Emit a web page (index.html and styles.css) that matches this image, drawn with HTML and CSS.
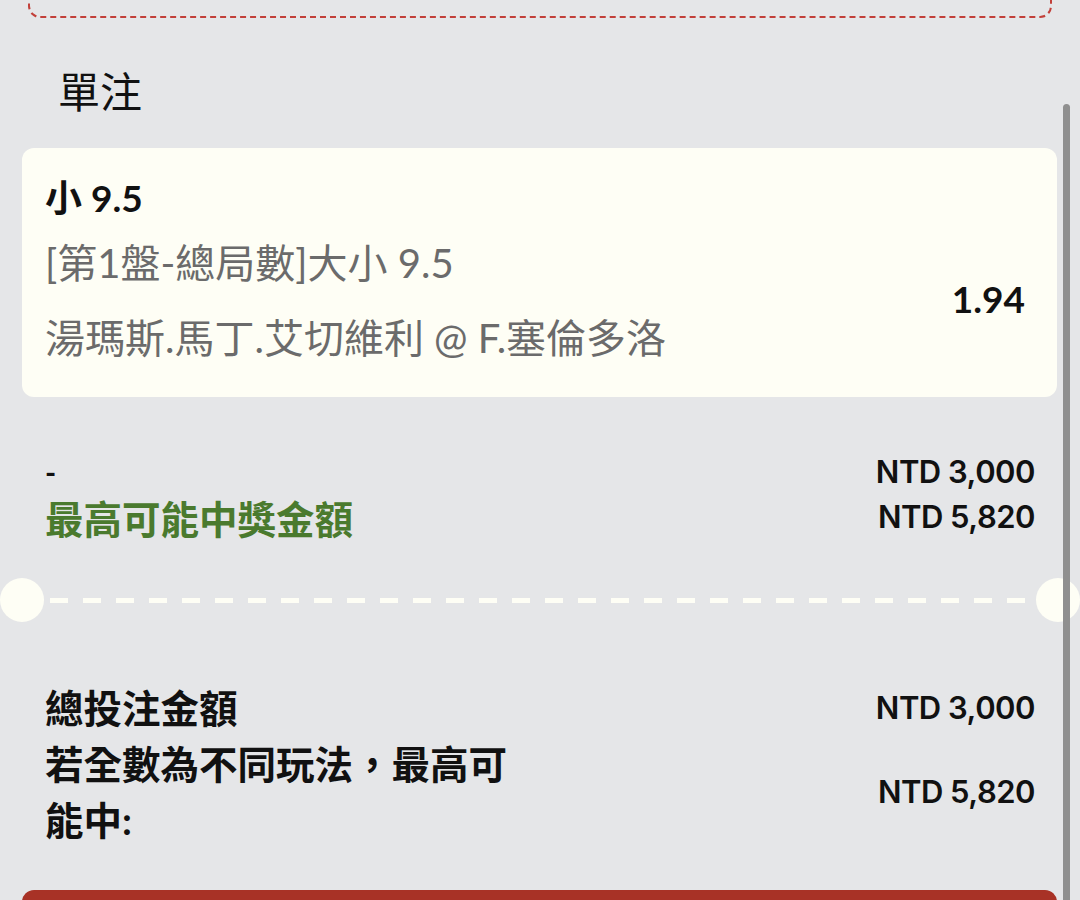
FILE: index.html
```html
<!DOCTYPE html>
<html lang="zh-Hant">
<head>
    <meta charset="UTF-8">
    <meta name="viewport" content="width=device-width, initial-scale=1.0">
    <title>單注</title>
    <link rel="stylesheet" href="styles.css">
</head>
<body>
    <div class="promo"></div>

    <h2 class="section-title">單注</h2>

    <div class="bet-card">
        <div class="bet-info">
            <div class="pick">小 9.5</div>
            <div class="market">[第1盤-總局數]大小 9.5</div>
            <div class="event">湯瑪斯.馬丁.艾切維利 @ F.塞倫多洛</div>
        </div>
        <div class="odds">1.94</div>
    </div>

    <div class="stake">
        <div class="row">
            <span class="stake-input">-</span>
            <span class="amount">NTD 3,000</span>
        </div>
        <div class="row">
            <span class="win-label">最高可能中獎金額</span>
            <span class="amount">NTD 5,820</span>
        </div>
    </div>

    <div class="divider">
        <span class="notch"></span>
        <span class="dashes"></span>
        <span class="notch"></span>
    </div>

    <div class="summary">
        <div class="row">
            <span class="label">總投注金額</span>
            <span class="amount">NTD 3,000</span>
        </div>
        <div class="row">
            <span class="label wrap">若全數為不同玩法，最高可能中:</span>
            <span class="amount">NTD 5,820</span>
        </div>
    </div>

    <button class="place-bet" type="button"></button>

    <div class="scrollbar"></div>
</body>
</html>
```

FILE: styles.css
```css
body {
    margin: 0;
    height: 900px;
    overflow: hidden;
    background-color: #e5e6e8;
    font-family: Lato, "Noto Sans CJK TC", sans-serif;
    color: #111;
}
.promo {
    height: 60px;
    margin: -46px 28px 0;
    border: 2px dashed #c2403a;
    border-radius: 12px;
}
.section-title {
    margin: 0;
    padding: 46px 58px 0;
    font-size: 42px;
    font-weight: 400;
    line-height: 56px;
}
.bet-card {
    display: flex;
    justify-content: space-between;
    margin: 28px 23px 0 22px;
    padding: 30px 32px 39px 23px;
    background: #fefef5;
    border-radius: 12px;
}
.pick {
    font-size: 37px;
    font-weight: bold;
    line-height: 40px;
}
.market, .event {
    color: #6b6b6b;
    font-size: 40px;
    line-height: 40px;
    margin-top: 25px;
}
.event {
    margin-top: 35px;
}
.odds {
    align-self: center;
    padding-top: 61px;
    font-size: 37px;
    font-weight: bold;
}
.row {
    display: flex;
    justify-content: space-between;
    align-items: center;
}
.stake {
    padding: 52px 45px 0 45px;
}
.stake .row {
    height: 45px;
}
.stake-input {
    font-size: 30px;
    font-weight: bold;
}
.win-label {
    color: #4a7a2e;
    font-size: 38.5px;
    font-weight: bold;
}
.amount {
    font-family: Inter, "Noto Sans", sans-serif;
    font-size: 31px;
    font-weight: 600;
    letter-spacing: -0.5px;
}
.divider {
    display: flex;
    align-items: center;
    margin-top: 39px;
    height: 44px;
}
.notch {
    flex: none;
    width: 44px;
    height: 44px;
    border-radius: 50%;
    background: #fefef5;
}
.dashes {
    flex: 1;
    height: 5px;
    margin: 0 6px;
    background: repeating-linear-gradient(90deg, #fefef5 0 18px, transparent 18px 33px);
}
.summary {
    padding: 58px 45px 0 45px;
}
.summary .row {
    line-height: 56px;
}
.label {
    font-size: 38.5px;
    font-weight: bold;
}
.wrap {
    max-width: 480px;
}
.place-bet {
    display: block;
    width: 1035px;
    height: 60px;
    margin: 42px 0 0 22px;
    border: none;
    border-radius: 12px;
    background-color: #a83226;
}
.scrollbar {
    position: absolute;
    top: 104px;
    left: 1063px;
    width: 7px;
    height: 820px;
    border-radius: 4px;
    background: #8f8f8f;
}
```
